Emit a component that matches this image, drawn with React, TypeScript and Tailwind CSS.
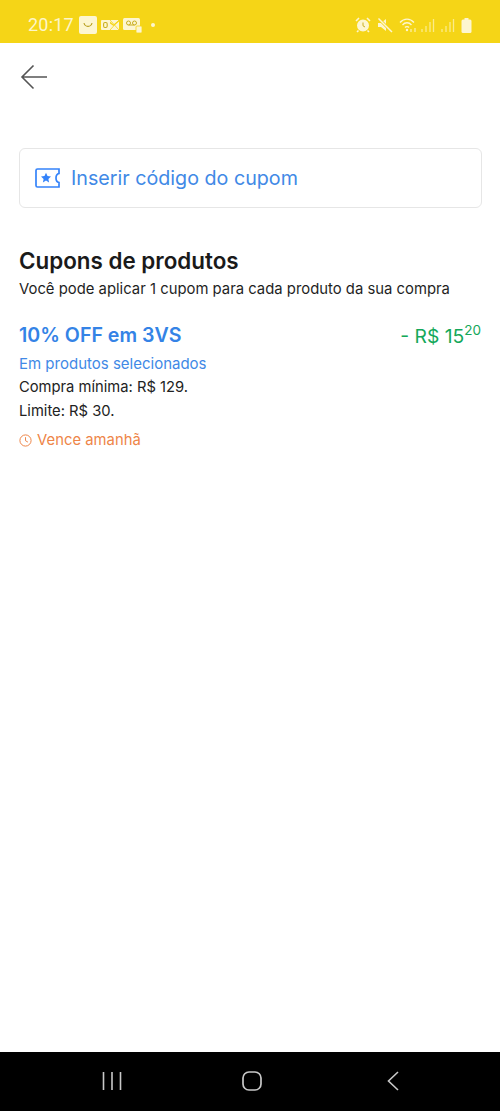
import React from "react";

const font = { fontFamily: 'Inter, sans-serif' };

const StatusBar: React.FC = () => (
  <div className="h-[43px] bg-[#f5d517] flex items-center pt-[7px] pl-[28px] pr-[28px] text-[#fdf6c8] shrink-0">
    <span className="text-[18px] leading-none font-['Roboto',sans-serif] tracking-[0.2px]">20:17</span>
    <svg width="18" height="18" viewBox="0 0 18 18" className="ml-[5px]">
      <rect width="18" height="18" rx="2" fill="#fdf6d0" />
      <path d="M5 7c1 4.500 7 4.500 8 0" fill="none" stroke="#b79e1c" strokeWidth="1.100" />
    </svg>
    <svg width="18" height="14" viewBox="0 0 18 14" className="ml-[4px]">
      <path d="M7 2h11l-5.500 4.500z M7 12h11V3.500l-5.500 4.500L7 4z" fill="#fdf6d0" />
      <path d="M9 2l9 10M18 2L9 12" stroke="#f5d517" strokeWidth="0.800" />
      <rect x="0" y="2" width="9" height="10" rx="1" fill="#fdf6d0" />
      <rect x="2.600" y="4.500" width="3.600" height="5" rx="1.400" fill="none" stroke="#c9ae20" strokeWidth="1.100" />
    </svg>
    <svg width="19" height="16" viewBox="0 0 19 16" className="ml-[4px]">
      <rect width="17" height="12" y="1" rx="1.500" fill="#fdf6d0" />
      <circle cx="5.500" cy="6" r="2" fill="none" stroke="#c9ae20" />
      <circle cx="11.500" cy="6" r="2" fill="none" stroke="#c9ae20" />
      <path d="M5.500 8h6" stroke="#c9ae20" />
      <rect x="13" y="9" width="6" height="7" rx="1" fill="#fdf6d0" stroke="#f5d517" strokeWidth="0.800" />
    </svg>
    <span className="ml-[9px] w-[4px] h-[4px] rounded-full bg-[#fdf6d0]" />
    <div className="ml-auto flex items-center">
      <svg width="16" height="16" viewBox="0 0 16 16">
        <circle cx="8" cy="8.500" r="5.200" fill="#fdf6d0" stroke="#fdf6d0" strokeWidth="1.600" />
        <path d="M8 5.500v3.300l2 1.200" fill="none" stroke="#c9ae20" />
        <path d="M1 4l3-3M15 4l-3-3M3.500 13.500L2 15M12.500 13.500L14 15" stroke="#fdf6d0" strokeWidth="1.600" />
      </svg>
      <svg width="16" height="16" viewBox="0 0 16 16" className="ml-[6px]">
        <path d="M1 6h3l5-4v12l-5-4H1z" fill="#fdf6d0" />
        <path d="M1.500 1.500L15 15" stroke="#f5d517" strokeWidth="3" />
        <path d="M1.500 1.500L15 15" stroke="#fdf6d0" strokeWidth="1.500" />
      </svg>
      <svg width="18" height="16" viewBox="0 0 18 16" className="ml-[6px]">
        <path d="M1 5.500c4-4.500 10-4.500 14 0M3.500 8c2.500-3 6.500-3 9 0M6 10.500c1-1.300 3-1.300 4 0" fill="none" stroke="#fdf6d0" strokeWidth="1.300" />
        <circle cx="8" cy="13" r="1.200" fill="#fdf6d0" />
        <path d="M12 12v3M16 15v-4" stroke="#fdf6d0" strokeWidth="1" />
      </svg>
      <svg width="15" height="15" viewBox="0 0 15 15" className="ml-[3px]">
        <path d="M2 11v3M6 8v6M10 4v10M13.500 1v13" stroke="#fbeb8a" strokeWidth="1.300" />
      </svg>
      <svg width="15" height="15" viewBox="0 0 15 15" className="ml-[5px]">
        <path d="M2 11v3M6 8v6M10 4v10M13.500 1v13" stroke="#fbeb8a" strokeWidth="1.300" />
      </svg>
      <svg width="11" height="15" viewBox="0 0 11 15" className="ml-[6px]">
        <rect x="3.500" y="0" width="4" height="2" fill="#fdf6d0" />
        <rect x="0.500" y="1.500" width="10" height="13.500" rx="1.500" fill="#fdf6d0" />
      </svg>
    </div>
  </div>
);

export default function App() {
  return (
    <div className="w-[500px] h-[1111px] flex flex-col bg-white overflow-hidden" style={font}>
      <StatusBar />
      <main className="flex-1 px-[19px]">
        <div className="h-[105px] pt-[21px]">
          <svg width="28" height="26" viewBox="0 0 28 26" className="ml-[1px]">
            <path d="M27 13H2M13.500 1.500L2 13l11.500 11.500" fill="none" stroke="#555" strokeWidth="1.600" />
          </svg>
        </div>
        <div className="h-[60px] w-[463px] border border-[#e6e6e6] rounded-[6px] flex items-center pl-[15px]">
          <svg width="25" height="20" viewBox="0 0 25 20">
            <path d="M2.500 1h21.500v4.500c-4 .8-4 8.200 0 9V19H2.500A1.500 1.500 0 0 1 1 17.500v-15A1.500 1.500 0 0 1 2.500 1z" fill="none" stroke="#3483fa" strokeWidth="1.700" />
            <path d="M11 4.800l1.500 3.300 3.500.4-2.600 2.400.7 3.500-3.100-1.800-3.100 1.800.7-3.500-2.600-2.400 3.500-.4z" fill="#3483fa" />
          </svg>
          <span className="ml-[11px] pt-[2px] text-[19.7px] leading-none text-[#4189e6]">Inserir código do cupom</span>
        </div>
        <h2 className="mt-[38px] text-[22.4px] leading-[30px] font-semibold text-[#1a1a1a]">Cupons de produtos</h2>
        <p className="mt-[3px] text-[14.85px] leading-[20px] text-[#1f1f1f]">Você pode aplicar 1 cupom para cada produto da sua compra</p>
        <div className="mt-[22px] flex justify-between items-start">
          <div>
            <h3 className="text-[19.6px] leading-[28px] font-semibold text-[#3483e6]">10% OFF em 3VS</h3>
            <p className="mt-[5px] text-[15px] leading-[20px] text-[#4189e6]">Em produtos selecionados</p>
            <p className="mt-[2px] text-[14.75px] leading-[22px] text-[#222]">Compra mínima: R$ 129.</p>
            <p className="mt-[2px] text-[14.75px] leading-[22px] text-[#222]">Limite: R$ 30.</p>
            <div className="mt-[7px] flex items-center text-[#ee8548]">
              <svg width="13" height="13" viewBox="0 0 13 13">
                <circle cx="6.500" cy="6.500" r="5.600" fill="none" stroke="currentColor" />
                <path d="M6.500 3.200v3.500l2.400 1.400" fill="none" stroke="currentColor" />
              </svg>
              <span className="ml-[5px] text-[14.85px] leading-[22px]">Vence amanhã</span>
            </div>
          </div>
          <div className="flex items-start text-[#14a85a] pt-[1px]">
            <span className="text-[19.3px] leading-[28px]">- R$ 15</span>
            <span className="text-[13.5px] leading-[13px] mt-[2px]">20</span>
          </div>
        </div>
      </main>
      <nav className="h-[59px] bg-black flex items-center relative shrink-0 pb-[1px]">
        <svg width="20" height="18" viewBox="0 0 20 18" className="ml-[102px]">
          <path d="M1.500 0v18M10 0v18M18.500 0v18" stroke="#c8c8c8" strokeWidth="1.600" />
        </svg>
        <svg width="20" height="20" viewBox="0 0 20 20" className="ml-[120px]">
          <rect x="1" y="1" width="18" height="18" rx="6" fill="none" stroke="#c8c8c8" strokeWidth="1.700" />
        </svg>
        <svg width="12" height="20" viewBox="0 0 12 20" className="ml-[125px]">
          <path d="M11 1L1.500 10 11 19" fill="none" stroke="#c8c8c8" strokeWidth="1.600" />
        </svg>
      </nav>
    </div>
  );
}
